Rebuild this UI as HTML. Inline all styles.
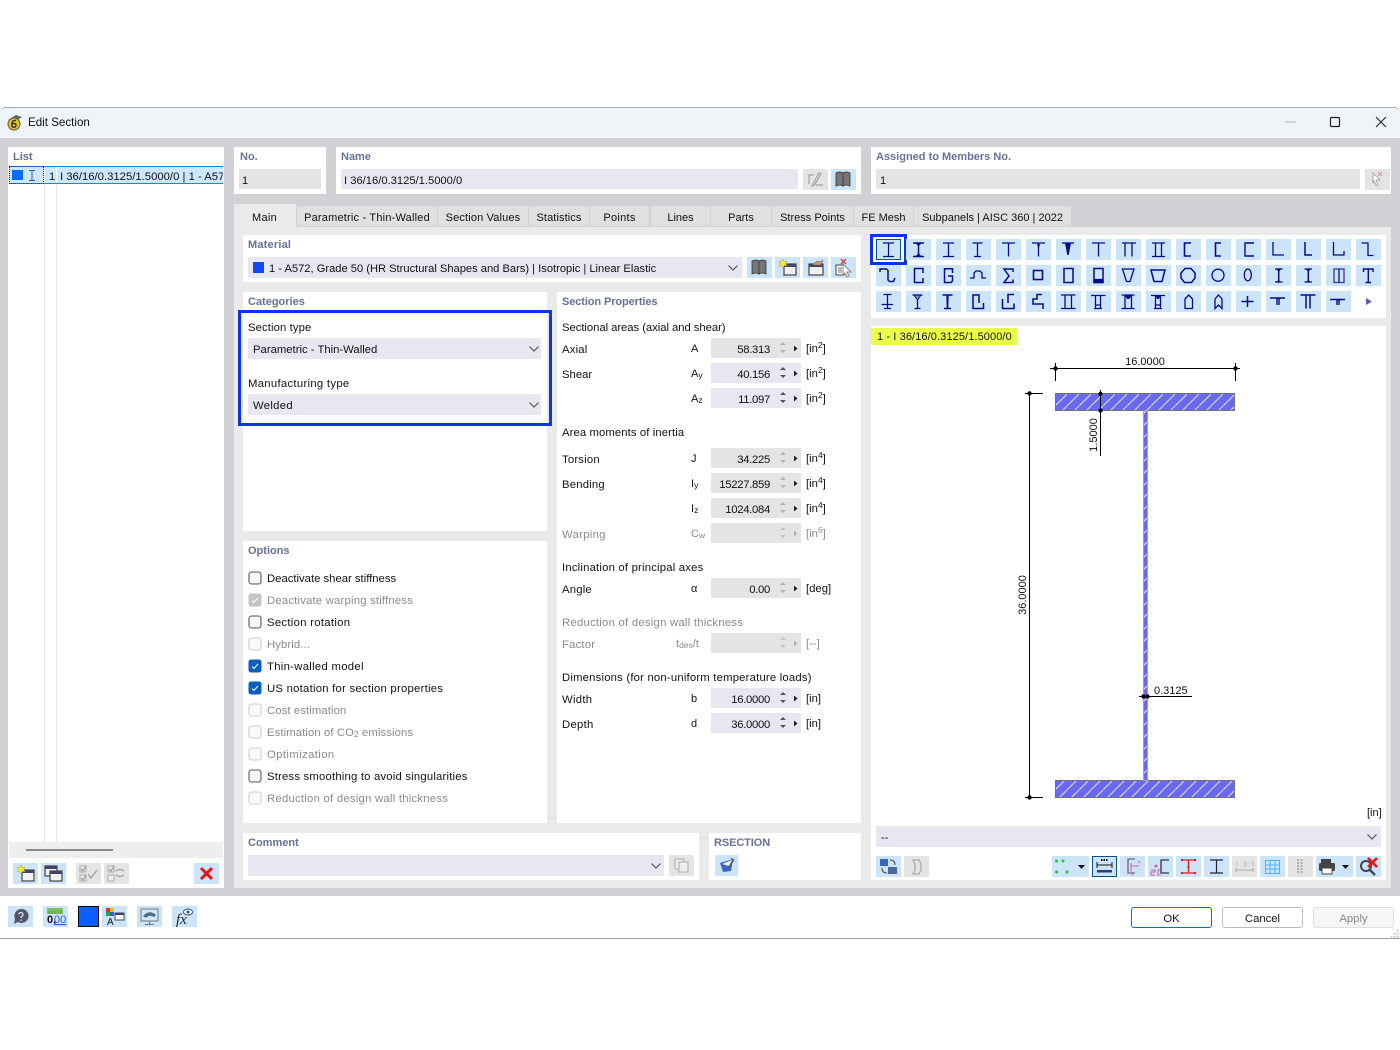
<!DOCTYPE html>
<html lang="en"><head><meta charset="utf-8"><title>Edit Section</title>
<style>
html,body{margin:0;padding:0;background:#fff;width:1400px;height:1050px;overflow:hidden}
body{position:relative;font-family:"Liberation Sans",sans-serif;font-size:11.3px;color:#111}
.b{position:absolute}
.t{position:absolute;white-space:nowrap;line-height:14px;height:14px;margin-top:1px}
.w{background:#fff}
.i{background:#e6e7f1}
.g{background:#e4e4e4}
.l{color:#66729a;font-weight:bold;font-size:11px}
.d{color:#8a8a8a}
.r{text-align:right;letter-spacing:-.3px}
.s1{letter-spacing:.1px}.s2{letter-spacing:.2px}.s25{letter-spacing:.25px}.s3{letter-spacing:.3px}.s4{letter-spacing:.4px}
.t sup{font-size:8.500px;line-height:0;vertical-align:4px}
.t sub{font-size:8.500px;line-height:0;vertical-align:-1px}
.tab{position:absolute;top:206px;height:20px;background:#e0e0e0;line-height:24px;text-align:center;white-space:nowrap;font-size:11px}
.btn{position:absolute;top:907px;height:19px;width:79px;border:1px solid #bbb;border-radius:3px;text-align:center;line-height:22px;background:#fff}
svg{position:absolute;left:0;top:0}
</style></head><body>

<!-- window frame -->
<div class="b" style="left:0;top:107px;width:1400px;height:832px;background:#fff;border-top:1px solid #a8a8a8;border-bottom:1px solid #a0a0a0;box-sizing:border-box;border-radius:6px 6px 0 0"></div>
<div class="b" style="left:0;top:108px;width:1400px;height:30px;background:#eff4f9;border-radius:6px 6px 0 0"></div>
<div class="b" style="left:0;top:138px;width:1400px;height:758px;background:#d0d0d5"></div>
<div class="t" style="left:28px;top:116px;font-size:11.600px;margin-top:0">Edit Section</div>

<!-- list -->
<div class="b w" style="left:8px;top:147px;width:216px;height:741px"></div>
<div class="t l" style="left:13px;top:149px">List</div>
<div class="b" style="left:44px;top:184px;width:1px;height:658px;background:#e8e8e8"></div>
<div class="b" style="left:56px;top:184px;width:1px;height:658px;background:#e8e8e8"></div>
<div class="b" style="left:9px;top:166px;width:214px;height:18px;background:#cce8ff;border-top:1px solid #1c86d6;border-bottom:1px solid #1c86d6;box-sizing:border-box"></div>
<div class="b" style="left:9px;top:166px;width:35px;height:18px;border:1px dotted #222;box-sizing:border-box"></div>
<div class="b" style="left:44px;top:167px;width:1px;height:16px;background:#fff"></div>
<div class="b" style="left:56px;top:167px;width:1px;height:16px;background:#fff"></div>
<div class="b" style="left:12px;top:170px;width:11px;height:10px;background:#0a6cff"></div>
<div class="t" style="left:49px;top:169px;font-size:11px">1</div>
<div class="b" style="left:60px;top:169px;width:163px;height:16px;overflow:hidden"><span class="t" style="left:0;top:0;font-size:11.300px">I 36/16/0.3125/1.5000/0 | 1 - A572, Grade 50</span></div>
<div class="b" style="left:9px;top:842px;width:214px;height:16px;background:#eee"></div>
<div class="b" style="left:26px;top:849px;width:87px;height:2px;background:#888"></div>

<!-- top panels -->
<div class="b w" style="left:234px;top:147px;width:92px;height:47px"></div>
<div class="t l" style="left:240px;top:149px">No.</div>
<div class="b g" style="left:239px;top:169px;width:82px;height:20px"></div>
<div class="t" style="left:242px;top:173px;font-size:11px">1</div>

<div class="b w" style="left:336px;top:147px;width:525px;height:47px"></div>
<div class="t l" style="left:341px;top:149px">Name</div>
<div class="b i" style="left:341px;top:169px;width:457px;height:20px"></div>
<div class="t" style="left:344px;top:173px;font-size:11.200px">I 36/16/0.3125/1.5000/0</div>

<div class="b w" style="left:871px;top:147px;width:520px;height:47px"></div>
<div class="t l" style="left:876px;top:149px">Assigned to Members No.</div>
<div class="b g" style="left:876px;top:169px;width:484px;height:20px"></div>
<div class="t" style="left:880px;top:173px;font-size:11px">1</div>

<!-- tabs -->
<div class="b" style="left:234px;top:227px;width:1157px;height:661px;background:#eaeaea"></div>
<div class="b" style="left:234px;top:204px;width:62px;height:24px;background:#eaeaea"></div>
<div class="t s3" style="left:252px;top:210px;font-size:11px">Main</div>
<div class="tab" style="left:297px;width:140px;letter-spacing:.2px">Parametric - Thin-Walled</div>
<div class="tab" style="left:438px;width:90px;letter-spacing:.15px">Section Values</div>
<div class="tab" style="left:529px;width:60px;letter-spacing:.1px">Statistics</div>
<div class="tab" style="left:590px;width:59px;letter-spacing:.3px">Points</div>
<div class="tab" style="left:651px;width:59px">Lines</div>
<div class="tab" style="left:711px;width:60px">Parts</div>
<div class="tab" style="left:772px;width:81px">Stress Points</div>
<div class="tab" style="left:854px;width:59px">FE Mesh</div>
<div class="tab" style="left:914px;width:157px">Subpanels | AISC 360 | 2022</div>

<!-- material -->
<div class="b w" style="left:243px;top:235px;width:618px;height:47px"></div>
<div class="t l" style="left:248px;top:237px;letter-spacing:.2px">Material</div>
<div class="b i" style="left:248px;top:257px;width:494px;height:21px"></div>
<div class="b" style="left:253px;top:262px;width:11px;height:11px;background:#1049ff"></div>
<div class="t" style="left:269px;top:261px;font-size:11.150px">1 - A572, Grade 50 (HR Structural Shapes and Bars) | Isotropic | Linear Elastic</div>

<!-- categories -->
<div class="b w" style="left:243px;top:292px;width:304px;height:239px"></div>
<div class="t l" style="left:248px;top:294px">Categories</div>
<div class="b" style="left:238px;top:310px;width:314px;height:116px;border:3px solid #0a35e8;box-sizing:border-box"></div>
<div class="t s1" style="left:248px;top:320px">Section type</div>
<div class="b i" style="left:248px;top:338px;width:293px;height:21px"></div>
<div class="t" style="left:253px;top:342px">Parametric - Thin-Walled</div>
<div class="t s3" style="left:248px;top:376px">Manufacturing type</div>
<div class="b i" style="left:248px;top:394px;width:293px;height:21px"></div>
<div class="t s3" style="left:253px;top:398px">Welded</div>

<!-- options -->
<div class="b w" style="left:243px;top:541px;width:304px;height:282px"></div>
<div class="t l" style="left:248px;top:543px">Options</div>
<div class="t" style="left:267px;top:571px">Deactivate shear stiffness</div>
<div class="t d s2" style="left:267px;top:593px">Deactivate warping stiffness</div>
<div class="t s3" style="left:267px;top:615px">Section rotation</div>
<div class="t d s1" style="left:267px;top:637px">Hybrid...</div>
<div class="t s3" style="left:267px;top:659px">Thin-walled model</div>
<div class="t s25" style="left:267px;top:681px">US notation for section properties</div>
<div class="t d s1" style="left:267px;top:703px">Cost estimation</div>
<div class="t d s1" style="left:267px;top:725px">Estimation of CO<sub>2</sub> emissions</div>
<div class="t d s4" style="left:267px;top:747px">Optimization</div>
<div class="t s2" style="left:267px;top:769px">Stress smoothing to avoid singularities</div>
<div class="t d s25" style="left:267px;top:791px">Reduction of design wall thickness</div>

<!-- section properties -->
<div class="b w" style="left:557px;top:292px;width:304px;height:531px"></div>
<div class="t l" style="left:562px;top:294px;letter-spacing:-.1px">Section Properties</div>
<div class="t" style="left:562px;top:320px;letter-spacing:-.05px">Sectional areas (axial and shear)</div>
<div class="t s2" style="left:562px;top:342px">Axial</div>
<div class="t" style="left:691px;top:341px;font-size:11px">A</div>
<div class="b g" style="left:711px;top:338px;width:90px;height:20px"></div>
<div class="t r" style="left:711px;top:342px;width:59px">58.313</div>
<div class="t" style="left:806px;top:341px">[in<sup>2</sup>]</div>

<div class="t" style="left:562px;top:367px">Shear</div>
<div class="t" style="left:691px;top:366px;font-size:11px">A<sub>y</sub></div>
<div class="b i" style="left:711px;top:363px;width:90px;height:20px"></div>
<div class="t r" style="left:711px;top:367px;width:59px">40.156</div>
<div class="t" style="left:806px;top:366px">[in<sup>2</sup>]</div>

<div class="t" style="left:691px;top:391px;font-size:11px">A<sub>z</sub></div>
<div class="b i" style="left:711px;top:388px;width:90px;height:20px"></div>
<div class="t r" style="left:711px;top:392px;width:59px">11.097</div>
<div class="t" style="left:806px;top:391px">[in<sup>2</sup>]</div>

<div class="t s1" style="left:562px;top:425px">Area moments of inertia</div>
<div class="t s2" style="left:562px;top:452px">Torsion</div>
<div class="t" style="left:691px;top:451px;font-size:11px">J</div>
<div class="b g" style="left:711px;top:448px;width:90px;height:20px"></div>
<div class="t r" style="left:711px;top:452px;width:59px">34.225</div>
<div class="t" style="left:806px;top:451px">[in<sup>4</sup>]</div>

<div class="t s2" style="left:562px;top:477px">Bending</div>
<div class="t" style="left:691px;top:476px;font-size:11px">I<sub>y</sub></div>
<div class="b g" style="left:711px;top:473px;width:90px;height:20px"></div>
<div class="t r" style="left:711px;top:477px;width:59px">15227.859</div>
<div class="t" style="left:806px;top:476px">[in<sup>4</sup>]</div>

<div class="t" style="left:691px;top:501px;font-size:11px">I<sub>z</sub></div>
<div class="b g" style="left:711px;top:498px;width:90px;height:20px"></div>
<div class="t r" style="left:711px;top:502px;width:59px">1024.084</div>
<div class="t" style="left:806px;top:501px">[in<sup>4</sup>]</div>

<div class="t d s3" style="left:562px;top:527px">Warping</div>
<div class="t d" style="left:691px;top:526px;font-size:11px">C<sub>w</sub></div>
<div class="b g" style="left:711px;top:523px;width:90px;height:20px"></div>
<div class="t d" style="left:806px;top:526px">[in<sup>6</sup>]</div>

<div class="t s2" style="left:562px;top:560px">Inclination of principal axes</div>
<div class="t s2" style="left:562px;top:582px">Angle</div>
<div class="t" style="left:691px;top:581px;font-size:11px">α</div>
<div class="b g" style="left:711px;top:578px;width:90px;height:20px"></div>
<div class="t r" style="left:711px;top:582px;width:59px">0.00</div>
<div class="t" style="left:806px;top:581px">[deg]</div>

<div class="t d s25" style="left:562px;top:615px">Reduction of design wall thickness</div>
<div class="t d s2" style="left:562px;top:637px">Factor</div>
<div class="t d" style="left:676px;top:636px;font-size:11px">t<sub>des</sub>/t</div>
<div class="b g" style="left:711px;top:633px;width:90px;height:20px"></div>
<div class="t d" style="left:806px;top:636px">[--]</div>

<div class="t s2" style="left:562px;top:670px">Dimensions (for non-uniform temperature loads)</div>
<div class="t s3" style="left:562px;top:692px">Width</div>
<div class="t" style="left:691px;top:691px;font-size:11px">b</div>
<div class="b i" style="left:711px;top:688px;width:90px;height:20px"></div>
<div class="t r" style="left:711px;top:692px;width:59px">16.0000</div>
<div class="t" style="left:806px;top:691px">[in]</div>

<div class="t s3" style="left:562px;top:717px">Depth</div>
<div class="t" style="left:691px;top:716px;font-size:11px">d</div>
<div class="b i" style="left:711px;top:713px;width:90px;height:20px"></div>
<div class="t r" style="left:711px;top:717px;width:59px">36.0000</div>
<div class="t" style="left:806px;top:716px">[in]</div>

<!-- comment / rsection -->
<div class="b w" style="left:243px;top:833px;width:456px;height:47px"></div>
<div class="t l" style="left:248px;top:835px">Comment</div>
<div class="b i" style="left:248px;top:855px;width:416px;height:21px"></div>
<div class="b w" style="left:709px;top:833px;width:152px;height:47px"></div>
<div class="t l" style="left:714px;top:835px;letter-spacing:-.1px">RSECTION</div>

<!-- right -->
<div class="b w" style="left:871px;top:235px;width:515px;height:83px"></div>
<div class="b w" style="left:871px;top:326px;width:515px;height:554px"></div>
<div class="b" style="left:871px;top:328px;width:147px;height:17px;background:#ebff4a"></div>
<div class="t s1" style="left:877px;top:329px;font-size:11px">1 - I 36/16/0.3125/1.5000/0</div>
<div class="t" style="left:1367px;top:805px;font-size:11px">[in]</div>
<div class="b i" style="left:876px;top:826px;width:505px;height:21px"></div>
<div class="t" style="left:881px;top:830px;font-size:11px">--</div>

<!-- bottom buttons -->
<div class="btn" style="left:1131px;border-color:#0a6cc4">OK</div>
<div class="btn" style="left:1222px">Cancel</div>
<div class="btn" style="left:1313px;background:#f6f6f6;border-color:#e0e0e0;color:#888">Apply</div>

<svg width="1400" height="1050" viewBox="0 0 1400 1050" xmlns="http://www.w3.org/2000/svg">
<defs>
<pattern id="h" width="12" height="12" patternUnits="userSpaceOnUse" patternTransform="translate(1055 394)"><rect width="12" height="12" fill="#6868f2"/><path d="M-1 13L13 -1" stroke="#e8e8ff" stroke-width="1"/></pattern>
<symbol id="sp" width="28" height="20" viewBox="0 0 28 20"><path d="M6 7L9 4L12 7Z" fill="#b4b4b4"/><path d="M6 12L9 15L12 12Z" fill="#b4b4b4"/><path d="M20 7.500L23.500 10.500L20 13.500Z" fill="#222"/></symbol>
<symbol id="sq" width="28" height="20" viewBox="0 0 28 20"><path d="M6 7L9 4L12 7Z" fill="#555"/><path d="M6 12L9 15L12 12Z" fill="#555"/><path d="M20 7.500L23.500 10.500L20 13.500Z" fill="#222"/></symbol>
<symbol id="sd" width="28" height="20" viewBox="0 0 28 20"><path d="M6 7L9 4L12 7Z" fill="#c4c4c4"/><path d="M6 12L9 15L12 12Z" fill="#c4c4c4"/><path d="M20 7.500L23.500 10.500L20 13.500Z" fill="#b0b0b0"/></symbol>
<symbol id="cv" width="12" height="8" viewBox="0 0 12 8"><path d="M1.500 1.500L6 6L10.500 1.500" fill="none" stroke="#555" stroke-width="1.200"/></symbol>
<symbol id="ck0" width="14" height="14" viewBox="0 0 14 14"><rect x="1" y="1" width="12" height="12" rx="2.500" fill="#f8f8f8" stroke="#555" stroke-width="1.100"/></symbol>
<symbol id="ckd" width="14" height="14" viewBox="0 0 14 14"><rect x="1" y="1" width="12" height="12" rx="2.500" fill="#fafafa" stroke="#ccc" stroke-width="1.100"/></symbol>
<symbol id="ckg" width="14" height="14" viewBox="0 0 14 14"><rect x=".5" y=".5" width="13" height="13" rx="2.500" fill="#c4c4c4"/><path d="M4 7.500L6 9.500L10 5" fill="none" stroke="#fff"/></symbol>
<symbol id="ckb" width="14" height="14" viewBox="0 0 14 14"><rect x=".5" y=".5" width="13" height="13" rx="2.500" fill="#0a5fc0"/><path d="M4 7.500L6 9.500L10 5" fill="none" stroke="#fff"/></symbol>
</defs>

<!-- title bar logo + window buttons -->
<path d="M8 120L16 115L22 117L15 122Z" fill="#5a6a7a"/>
<circle cx="14" cy="124" r="6" fill="#e6c02a" stroke="#5a5a3a"/>
<path d="M16 120.500C12 120 11.500 123 12 126C13 128 16 127.500 16 125C16 123.500 14 123 12 124" fill="none" stroke="#333" stroke-width="1.400"/>
<path d="M1285 122H1296" stroke="#b0b0b0"/>
<rect x="1330.500" y="117.500" width="9" height="9" rx="1" fill="none" stroke="#222" stroke-width="1.200"/>
<path d="M1376 117L1386 127M1386 117L1376 127" stroke="#222" stroke-width="1.100"/>

<!-- list row I -->
<path d="M29 170.500H35M32 170.500V180.500M29 180.500H35" stroke="#3a55b0" fill="none"/>

<!-- name buttons -->
<rect x="803" y="169" width="25" height="21" fill="#e4e4e4"/>
<path d="M809 184V175H814M819 173L813 184L812 186L814.500 185L821 174ZM816 185H823" fill="none" stroke="#a0a0a0" stroke-width="1.200"/>
<g id="book"><rect x="831" y="169" width="25" height="21" fill="#cce4f7"/>
<path d="M836 173Q840 171 843 173V186Q840 184 836 186ZM843 173Q846 171 850 173V186Q846 184 843 186Z" fill="#777" stroke="#333" stroke-width=".8"/></g>
<rect x="1365" y="169" width="25" height="21" fill="#e4e4e4"/>
<path d="M1373 173L1380 180L1376 180L1378 185L1376 185L1374 181L1373 183Z" fill="#fff" stroke="#aaa"/>
<path d="M1382 172L1378 176M1378 172L1382 176" stroke="#c8a0a0"/>

<!-- material buttons -->
<use href="#book" transform="translate(-84 88)"/>
<g transform="translate(775 257)"><rect width="25" height="21" fill="#cce4f7"/><rect x="9" y="7" width="12" height="11" fill="#f0f0f0" stroke="#444" stroke-width="1.200"/><rect x="9" y="7" width="12" height="3" fill="#446"/><path d="M8 2L9.300 4.700L12 4L10.500 6.500L12 9L9.300 8.300L8 11L6.700 8.300L4 9L5.500 6.500L4 4L6.700 4.700Z" fill="#f4ee30" stroke="#b8a820" stroke-width=".5"/></g>
<g transform="translate(803 257)"><rect width="25" height="21" fill="#cce4f7"/><rect x="6" y="7" width="14" height="11" fill="#f0f0f0" stroke="#444" stroke-width="1.200"/><rect x="6" y="7" width="14" height="3" fill="#446"/><path d="M10 8Q14 2 17 5L20 3L18 8H12Z" fill="#c89878" stroke="#7a5a40" stroke-width=".5"/></g>
<g transform="translate(831 257)"><rect width="25" height="21" fill="#cce4f7"/><rect x="5" y="8" width="8" height="10" fill="#fff" stroke="#444"/><path d="M7 11H11M7 13H11M7 15H11" stroke="#444" stroke-width=".7"/><path d="M12 7L20 15L16 15L18 19L16 20L14 16L12 18Z" fill="#fff" stroke="#888"/><path d="M10 2L15 7M15 2L10 7" stroke="#d22" stroke-width="1.200"/></g>

<!-- chevrons -->
<use href="#cv" x="727" y="264"/>
<use href="#cv" x="528" y="345"/>
<use href="#cv" x="528" y="401"/>
<use href="#cv" x="650" y="862"/>
<use href="#cv" x="1366" y="833"/>

<!-- checkboxes -->
<use href="#ck0" x="248" y="571"/>
<use href="#ckg" x="248" y="593"/>
<use href="#ck0" x="248" y="615"/>
<use href="#ckd" x="248" y="637"/>
<use href="#ckb" x="248" y="659"/>
<use href="#ckb" x="248" y="681"/>
<use href="#ckd" x="248" y="703"/>
<use href="#ckd" x="248" y="725"/>
<use href="#ckd" x="248" y="747"/>
<use href="#ck0" x="248" y="769"/>
<use href="#ckd" x="248" y="791"/>

<!-- spinners -->
<use href="#sp" x="774" y="338"/>
<use href="#sq" x="774" y="363"/>
<use href="#sq" x="774" y="388"/>
<use href="#sp" x="774" y="448"/>
<use href="#sp" x="774" y="473"/>
<use href="#sp" x="774" y="498"/>
<use href="#sd" x="774" y="523"/>
<use href="#sp" x="774" y="578"/>
<use href="#sd" x="774" y="633"/>
<use href="#sq" x="774" y="688"/>
<use href="#sq" x="774" y="713"/>

<!-- left toolbar -->
<g transform="translate(13 863)"><rect width="25" height="21" fill="#cce4f7"/><rect x="9" y="7" width="12" height="11" fill="#f0f0f0" stroke="#444" stroke-width="1.200"/><rect x="9" y="7" width="12" height="3" fill="#446"/><path d="M8 2L9.300 4.700L12 4L10.500 6.500L12 9L9.300 8.300L8 11L6.700 8.300L4 9L5.500 6.500L4 4L6.700 4.700Z" fill="#f4ee30" stroke="#b8a820" stroke-width=".5"/></g>
<g transform="translate(41 863)"><rect width="25" height="21" fill="#cce4f7"/><rect x="4" y="3" width="12" height="10" fill="#f0f0f0" stroke="#444" stroke-width="1.200"/><rect x="4" y="3" width="12" height="3" fill="#446"/><rect x="9" y="8" width="12" height="10" fill="#f0f0f0" stroke="#444" stroke-width="1.200"/><rect x="9" y="8" width="12" height="3" fill="#446"/></g>
<g transform="translate(76 863)"><rect width="25" height="21" fill="#e4e4e4"/><rect x="4" y="3" width="6" height="6" fill="#eee" stroke="#aaa"/><rect x="4" y="12" width="6" height="6" fill="#eee" stroke="#aaa"/><path d="M5 6L7 8L10 3M5 15L7 17L10 12M12 11L15 15L21 7" fill="none" stroke="#a0a0a0" stroke-width="1.300"/></g>
<g transform="translate(104 863)"><rect width="25" height="21" fill="#e4e4e4"/><rect x="4" y="3" width="6" height="6" fill="#eee" stroke="#aaa"/><rect x="4" y="12" width="6" height="6" fill="#eee" stroke="#aaa"/><path d="M5 6L7 8L10 3M12 8Q16 5 20 8M20 12Q16 15 12 12" fill="none" stroke="#a0a0a0" stroke-width="1.200"/></g>
<g transform="translate(194 863)"><rect width="25" height="21" fill="#cce4f7"/><path d="M7 5L18 16M18 5L7 16" stroke="#ee1111" stroke-width="3"/></g>

<!-- comment / rsection buttons -->
<g transform="translate(669 855)"><rect width="25" height="21" fill="#e4e4e4"/><rect x="6" y="4" width="9" height="10" fill="#eee" stroke="#aaa"/><rect x="10" y="7" width="9" height="10" fill="#eee" stroke="#aaa"/></g>
<g transform="translate(715 855)"><rect width="23" height="21" fill="#cce4f7"/><path d="M5 8L18 4L16 16L8 17Z" fill="#3a66c0"/><path d="M7 9L17 5L14 11Z" fill="#f4f4ff"/><path d="M16 3L19 5L12 14" stroke="#555" fill="none"/></g>

<!-- palette selection -->
<rect x="871.500" y="235.500" width="34" height="28" fill="#fff" stroke="#0a35e8" stroke-width="3"/>
<g fill="#cce4f7">
<rect x="876.500" y="239.500" width="24" height="20" stroke="#0a4f8f"/>
<rect x="906" y="239" width="25" height="21"/><rect x="936" y="239" width="25" height="21"/><rect x="966" y="239" width="25" height="21"/><rect x="996" y="239" width="25" height="21"/><rect x="1026" y="239" width="25" height="21"/><rect x="1056" y="239" width="25" height="21"/><rect x="1086" y="239" width="25" height="21"/><rect x="1116" y="239" width="25" height="21"/><rect x="1146" y="239" width="25" height="21"/><rect x="1176" y="239" width="25" height="21"/><rect x="1206" y="239" width="25" height="21"/><rect x="1236" y="239" width="25" height="21"/><rect x="1266" y="239" width="25" height="21"/><rect x="1296" y="239" width="25" height="21"/><rect x="1326" y="239" width="25" height="21"/><rect x="1356" y="239" width="25" height="21"/>
<rect x="876" y="265" width="25" height="21"/><rect x="906" y="265" width="25" height="21"/><rect x="936" y="265" width="25" height="21"/><rect x="966" y="265" width="25" height="21"/><rect x="996" y="265" width="25" height="21"/><rect x="1026" y="265" width="25" height="21"/><rect x="1056" y="265" width="25" height="21"/><rect x="1086" y="265" width="25" height="21"/><rect x="1116" y="265" width="25" height="21"/><rect x="1146" y="265" width="25" height="21"/><rect x="1176" y="265" width="25" height="21"/><rect x="1206" y="265" width="25" height="21"/><rect x="1236" y="265" width="25" height="21"/><rect x="1266" y="265" width="25" height="21"/><rect x="1296" y="265" width="25" height="21"/><rect x="1326" y="265" width="25" height="21"/><rect x="1356" y="265" width="25" height="21"/>
<rect x="876" y="291" width="25" height="21"/><rect x="906" y="291" width="25" height="21"/><rect x="936" y="291" width="25" height="21"/><rect x="966" y="291" width="25" height="21"/><rect x="996" y="291" width="25" height="21"/><rect x="1026" y="291" width="25" height="21"/><rect x="1056" y="291" width="25" height="21"/><rect x="1086" y="291" width="25" height="21"/><rect x="1116" y="291" width="25" height="21"/><rect x="1146" y="291" width="25" height="21"/><rect x="1176" y="291" width="25" height="21"/><rect x="1206" y="291" width="25" height="21"/><rect x="1236" y="291" width="25" height="21"/><rect x="1266" y="291" width="25" height="21"/><rect x="1296" y="291" width="25" height="21"/><rect x="1326" y="291" width="25" height="21"/>
</g>
<g fill="none" stroke="#0a0a8a" stroke-width="1.300">
<!-- row 1 -->
<g transform="translate(876 239)"><path d="M7 4H18M12.500 4V17.500M7 17.500H18" stroke-width="1.200"/></g>
<g transform="translate(906 239)"><path d="M7 4H18M7 17.500H18M12.500 4V17.500" stroke-width="1.400"/><path d="M10 4.500Q12 5 12.500 7.500Q13 5 15 4.500M10 17Q12 16.500 12.500 14Q13 16.500 15 17" stroke-width="1"/></g>
<g transform="translate(936 239)"><path d="M7 4H18M12.500 4V17.500M7 17.500H18"/></g>
<g transform="translate(966 239)"><path d="M6.500 4H16.500M11.500 4V17.500M8 17.500H15"/></g>
<g transform="translate(996 239)"><path d="M6 4H19M12.500 4V17.500"/></g>
<g transform="translate(1026 239)"><path d="M6 4H19M12.500 4V17.500"/><path d="M11 5H14L12.800 9H12.200Z" fill="#0a0a8a" stroke="none"/></g>
<g transform="translate(1056 239)"><path d="M6 4H18"/><path d="M9 4H15L12.700 16H11.300Z" fill="#0a0a8a" stroke="none"/></g>
<g transform="translate(1086 239)"><path d="M6 4H19M12.500 4V17.500"/></g>
<g transform="translate(1116 239)"><path d="M6 4H20M9 4V17.500M16 4V17.500"/></g>
<g transform="translate(1146 239)"><path d="M6 4H19M6 17.500H19M9.500 4V17.500M15.500 4V17.500"/></g>
<g transform="translate(1176 239)"><path d="M15 4H8.500V17H15" stroke-width="1.600"/></g>
<g transform="translate(1206 239)"><path d="M15 4H9.500V17H15" stroke-width="1.600"/></g>
<g transform="translate(1236 239)"><path d="M18 4H9V17H18" stroke-width="1.400"/></g>
<g transform="translate(1266 239)"><path d="M7 3V16H18"/></g>
<g transform="translate(1296 239)"><path d="M9 3V16H16" stroke-width="1.500"/></g>
<g transform="translate(1326 239)"><path d="M7.500 3V16H18V12"/></g>
<g transform="translate(1356 239)"><path d="M5.500 4H12V16.500H17.500"/></g>
<!-- row 2 -->
<g transform="translate(876 265)"><path d="M4 7V4H10.500L12 5.500V15L13.500 16.500H17.500L19 13" stroke-width="1.500"/></g>
<g transform="translate(906 265)"><path d="M17 8V3.500H8.500V17.500H17V13" stroke-width="1.500"/></g>
<g transform="translate(936 265)"><path d="M16.500 8V3.700H8.500V17.500H15L16.500 16V11H12" stroke-width="1.500"/></g>
<g transform="translate(966 265)"><path d="M4 13H8V8L10 6H14L16 8V13H20"/></g>
<g transform="translate(996 265)"><path d="M17 7V4H8L13 11L8 17.500H17V14.500" stroke-width="1.500"/></g>
<g transform="translate(1026 265)"><rect x="7.500" y="5.500" width="9" height="9" stroke-width="1.600"/></g>
<g transform="translate(1056 265)"><rect x="8" y="3.500" width="9" height="14" stroke-width="1.500"/></g>
<g transform="translate(1086 265)"><rect x="8" y="3.500" width="9" height="14" stroke-width="1.500"/><rect x="8" y="14.500" width="9" height="3" fill="#0a0a8a"/></g>
<g transform="translate(1116 265)"><path d="M6.500 4H18L14 16.500H10.500Z"/></g>
<g transform="translate(1146 265)"><path d="M5 5H19L16 16.500H8Z" stroke-width="1.500"/></g>
<g transform="translate(1176 265)"><path d="M9 3.500H15L19 8V13L15.500 17.500H8.500L5 13V8Z" stroke-width="1.500"/></g>
<g transform="translate(1206 265)"><circle cx="12" cy="10.200" r="6"/></g>
<g transform="translate(1236 265)"><ellipse cx="11.800" cy="9.900" rx="3.500" ry="5.900"/></g>
<g transform="translate(1266 265)"><path d="M9 4H16.500M9 17H16.500"/><path d="M12.700 4V17" stroke-width="1.500"/><path d="M10.200 4H15.200L12.700 7ZM10.200 17.500H15.200L12.700 14.500Z" fill="#0a0a8a" stroke="none"/></g>
<g transform="translate(1296 265)"><path d="M8.500 4H16M8.500 17H16"/><path d="M12.300 4V17" stroke-width="1.500"/><path d="M9.800 4H14.800L12.300 7ZM9.800 17.500H14.800L12.300 14.500Z" fill="#0a0a8a" stroke="none"/></g>
<g transform="translate(1326 265)"><rect x="8" y="4" width="10" height="13.500" stroke="#3a3a9a"/><path d="M13 4V17.500"/></g>
<g transform="translate(1356 265)"><path d="M7.500 7V4H17V7M12.300 4V17.500M9.500 17.500H15" stroke-width="1.400"/></g>
<!-- row 3 -->
<g transform="translate(876 291)"><path d="M7.500 3.500H15.500M11.500 3.500V17.500M5.500 13.500H17M8 17.500H15"/></g>
<g transform="translate(906 291)"><path d="M8 4L11.500 9L15 4Z" fill="#8a8ac8" stroke-width="1"/><path d="M6.500 4H16.500M11.500 9V17.500M8.500 17.500H14.500"/></g>
<g transform="translate(936 291)"><path d="M6.500 4H16.500M8 17.500H15" stroke-width="1.500"/><path d="M10.300 4H12.700L12.300 17H10.700Z" fill="#0a0a8a" stroke="none"/></g>
<g transform="translate(966 291)"><path d="M13 12V4H7V17.500H17.500V12" stroke-width="1.500"/></g>
<g transform="translate(996 291)"><path d="M18 3.500H12V12M6.500 8V17.500H18V12.500" stroke-width="1.500"/></g>
<g transform="translate(1026 291)"><path d="M16 3.500H11V8H7V13H17V18" stroke-width="1.500"/></g>
<g transform="translate(1056 291)"><path d="M5 4H19.500M5 17.500H19.500M9 4V17.500M15.500 4V17.500"/></g>
<g transform="translate(1086 291)"><path d="M5 4.500H19.500M9.500 4.500V17.500M14.500 4.500V17.500M9.500 14H14.500M8 17.500H16"/></g>
<g transform="translate(1116 291)"><path d="M5.500 4H18.500M5.500 17.500H18.500M9 4V17.500M15.500 4V17.500"/><path d="M9 4.500H15.500L13.500 8H11Z" fill="#0a0a8a" stroke="none"/></g>
<g transform="translate(1146 291)"><path d="M5 4.500H19M9.500 4.500V17.500M14.500 4.500V17.500M9.500 14H14.500M8 17.500H16"/><path d="M9.500 4.500H14.500L13 8H11Z" fill="#0a0a8a" stroke="none"/></g>
<g transform="translate(1176 291)"><path d="M9 8L12.700 4L16.500 8V17.500H9Z"/></g>
<g transform="translate(1206 291)"><path d="M9 8L12.500 4L16 8V17.500L12.500 14L9 17.500Z"/></g>
<g transform="translate(1236 291)"><path d="M11.500 5V16M5.500 10.500H17.500" stroke-width="1.500"/></g>
<g transform="translate(1266 291)"><path d="M4 7H19M10 7Q11 7 11 9V14M15 7Q13 7 13 9V14" stroke-width="1.400"/></g>
<g transform="translate(1296 291)"><path d="M4.500 4H19.500M10 4V17.500M14 4V17.500" stroke-width="1.500"/></g>
<g transform="translate(1326 291)"><path d="M4 8.500H19M10 8.500Q11 8.500 11 10V14M15 8.500Q13 8.500 13 10V14" stroke-width="1.400"/></g>
</g>
<path d="M1366 298L1372 301.500L1366 305Z" fill="#5a5ab8"/>

<!-- section drawing -->
<rect x="1055.500" y="393.500" width="179" height="17" fill="url(#h)" stroke="#707070"/>
<rect x="1055.500" y="780.500" width="179" height="17" fill="url(#h)" stroke="#707070"/>
<rect x="1143.500" y="410.500" width="4" height="370" fill="url(#h)" stroke="#a0a0a0"/>
<g stroke="#000" stroke-width="1" fill="none">
<path d="M1050 368.500H1240M1055.500 363V381M1235.500 363V381"/>
<path d="M1029.500 393V798M1025 393.500H1043M1025 797.500H1043"/>
<path d="M1100.500 390V456"/>
<path d="M1139 696.500H1192"/>
</g>
<g fill="#000">
<circle cx="1055.500" cy="368.500" r="2.200"/><circle cx="1235.500" cy="368.500" r="2.200"/>
<circle cx="1029.500" cy="393.500" r="2.200"/><circle cx="1029.500" cy="797.500" r="2.200"/>
<circle cx="1100.500" cy="394" r="2.200"/><circle cx="1100.500" cy="410.500" r="2.200"/>
<circle cx="1143.500" cy="696.500" r="2.200"/><circle cx="1147.500" cy="696.500" r="2.200"/>
</g>
<g font-family="'Liberation Sans',sans-serif" font-size="11" fill="#111">
<text x="1145" y="365" text-anchor="middle">16.0000</text>
<text x="1154" y="694">0.3125</text>
<text transform="translate(1097 435) rotate(-90)" text-anchor="middle">1.5000</text>
<text transform="translate(1026 595) rotate(-90)" text-anchor="middle">36.0000</text>
</g>

<!-- preview toolbar -->
<g transform="translate(876 856)"><rect width="25" height="21" fill="#cce4f7"/><rect x="4" y="3" width="8" height="7" fill="#3a66c0"/><rect x="12" y="11" width="9" height="7" fill="#4a6a9a"/><path d="M14 4Q19 4 19 9M11 17Q6 17 6 12" fill="none" stroke="#444"/></g>
<g transform="translate(904 856)"><rect width="25" height="21" fill="#e4e4e4"/><path d="M9 4H15L17 8V14L15 18H9L11 14V8Z" fill="none" stroke="#aaa" stroke-width="1.300"/></g>
<g transform="translate(1052 856)"><rect width="37" height="21" fill="#cce4f7"/><g fill="#20c040"><circle cx="4.500" cy="5" r="1.500"/><circle cx="11" cy="5" r="1.500"/><circle cx="4.500" cy="16" r="1.500"/><circle cx="15" cy="16" r="1.500"/></g><path d="M26 9H33L29.500 13Z" fill="#111"/></g>
<g transform="translate(1092 856)"><rect x=".5" y=".5" width="24" height="20" fill="#cce4f7" stroke="#0a4f8f"/><path d="M5 9H20M5 6V12M20 6V12" stroke="#111" fill="none"/><rect x="5" y="14" width="15" height="2.500" fill="#2a3a7a"/><path d="M9 4H16" stroke="#111" stroke-dasharray="1.500 1" stroke-width="2"/></g>
<g transform="translate(1120 856)"><rect width="25" height="21" fill="#cce4f7"/><path d="M15 3H8V17H15" fill="none" stroke="#667" stroke-width="1.300"/><path d="M11 10H19M11 7V16" stroke="#d060a0" fill="none"/><path d="M18 5L20 7M11 17L13 19" stroke="#d060a0"/></g>
<g transform="translate(1148 856)"><rect width="25" height="21" fill="#cce4f7"/><path d="M21 4H13V17H21" fill="none" stroke="#334" stroke-width="1.300"/><circle cx="8" cy="10" r="1.500" fill="#d060a0"/><path d="M4 14H8V16H4V19H8M14 14H11V19H14" fill="none" stroke="#d060a0" transform="translate(-1 0)"/></g>
<g transform="translate(1176 856)"><rect width="25" height="21" fill="#cce4f7"/><path d="M6 4H19M6 17H19M12.500 4V17" stroke="#d82020" fill="none" stroke-width="1.300"/><g fill="#d82020"><circle cx="6" cy="4" r="1.200"/><circle cx="19" cy="4" r="1.200"/><circle cx="6" cy="17" r="1.200"/><circle cx="19" cy="17" r="1.200"/><circle cx="12.500" cy="11" r="1.200"/></g></g>
<g transform="translate(1204 856)"><rect width="25" height="21" fill="#cce4f7"/><path d="M6 4H19M6 17H19M12.500 4V17" stroke="#223" fill="none" stroke-width="1.200"/></g>
<g transform="translate(1232 856)"><rect width="25" height="21" fill="#e4e4e4"/><path d="M4 14H21M4 12V16M21 12V16" stroke="#aaa" fill="none"/><path d="M5 6V10M12 6H14V10H12M19 6H21V10" stroke="#bbb" fill="none"/></g>
<g transform="translate(1260 856)"><rect width="25" height="21" fill="#cce4f7"/><path d="M5.500 4.500H19.500V17.500H5.500ZM5.500 9H19.500M5.500 13H19.500M10 4.500V17.500M15 4.500V17.500" stroke="#4ab4ff" fill="none"/></g>
<g transform="translate(1288 856)"><rect width="25" height="21" fill="#e4e4e4"/><path d="M9 4H16M9 7H16M9 10H16M9 13H16M9 16H16" stroke="#999" stroke-width="1.400" stroke-dasharray="2 1.500"/></g>
<g transform="translate(1316 856)"><rect width="37" height="21" fill="#cce4f7"/><rect x="5" y="3" width="10" height="4" fill="#444"/><rect x="3" y="7" width="16" height="8" rx="1.500" fill="#444"/><rect x="6" y="12" width="10" height="6" fill="#fff" stroke="#444"/><path d="M26 9H33L29.500 13Z" fill="#111"/></g>
<g transform="translate(1356 856)"><rect width="25" height="21" fill="#cce4f7"/><circle cx="10" cy="10" r="5" fill="none" stroke="#445" stroke-width="2"/><path d="M14 14L19 19" stroke="#445" stroke-width="2.500"/><path d="M12 2L21 11M21 2L12 11" stroke="#ee1111" stroke-width="2.600"/></g>

<!-- bottom-left toolbar -->
<g transform="translate(8 906)"><rect width="25" height="21" fill="#cce4f7"/><path d="M13 3A7 7 0 1 1 10 16L6 18L7 13A7 7 0 0 1 13 3Z" fill="#556"/><path d="M10.500 8Q13 5 15 8Q15 10 13 11V12M13 13.500V15" fill="none" stroke="#cce4f7" stroke-width="1.300"/></g>
<g transform="translate(43 906)"><rect width="25" height="21" fill="#cce4f7"/><rect x="4" y="2" width="16" height="6" fill="#7cc060"/><path d="M6 5V8M9 5V8M12 5V8M15 5V8M18 5V8" stroke="#4a8a40" stroke-width=".7"/><text x="4" y="17" font-family="'Liberation Sans',sans-serif" font-size="11" fill="#111" font-weight="bold">0,</text><text x="11" y="17" font-family="'Liberation Sans',sans-serif" font-size="11" fill="#2a5ae0" text-decoration="underline">00</text></g>
<rect x="78.500" y="906.500" width="20" height="20" fill="#0a5fff" stroke="#000"/>
<g transform="translate(102 906)"><rect width="25" height="21" fill="#cce4f7"/><rect x="4" y="2" width="4" height="4" fill="#d83030"/><rect x="8" y="2" width="4" height="4" fill="#e0c020"/><rect x="4" y="6" width="4" height="4" fill="#30a040"/><rect x="8" y="6" width="4" height="4" fill="#3060d0"/><text x="5" y="19" font-family="'Liberation Sans',sans-serif" font-size="10" fill="#111">A</text><rect x="13" y="7" width="9" height="7" fill="#fff" stroke="#446"/><rect x="13" y="7" width="9" height="2" fill="#446"/></g>
<g transform="translate(137 906)"><rect width="25" height="21" fill="#cce4f7"/><rect x="4" y="3" width="17" height="12" fill="#d8e6f2" stroke="#6a7a8a"/><path d="M6 10Q12 3 19 9L17 11Q12 8 9 12Z" fill="#4a6a8a"/><path d="M12.500 15V18M8 18.500H17" stroke="#6a7a8a"/></g>
<g transform="translate(172 906)"><rect width="25" height="21" fill="#cce4f7"/><text x="4" y="18" font-family="'Liberation Serif',serif" font-style="italic" font-size="15" fill="#222">fx</text><ellipse cx="16" cy="6" rx="4.500" ry="3" fill="#fff" stroke="#2a4a8a"/><circle cx="16" cy="6" r="1.500" fill="#2a4a8a"/></g>

<!-- resize grip -->
<g fill="#b8b8b8"><rect x="1397" y="930" width="1.500" height="1.500"/><rect x="1394" y="933" width="1.500" height="1.500"/><rect x="1397" y="933" width="1.500" height="1.500"/><rect x="1391" y="936" width="1.500" height="1.500"/><rect x="1394" y="936" width="1.500" height="1.500"/><rect x="1397" y="936" width="1.500" height="1.500"/></g>
</svg>
</body></html>
